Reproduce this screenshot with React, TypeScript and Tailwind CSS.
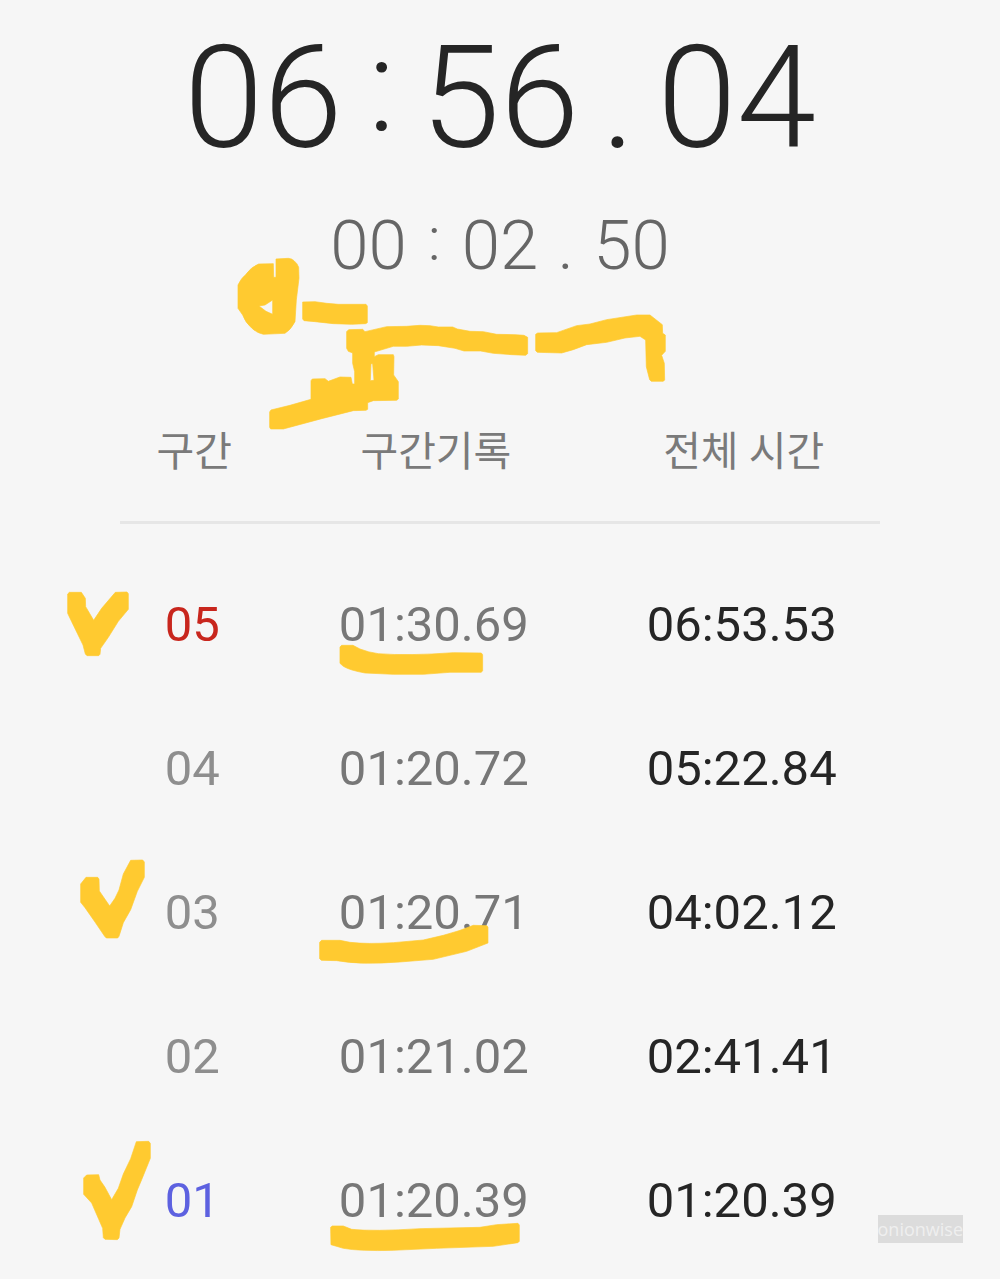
import React from 'react';
import clsx from 'clsx';

type Lap = {
  no: string;
  split: string;
  total: string;
  tone: string;
};

const laps: Lap[] = [
  { no: '05', split: '01:30.69', total: '06:53.53', tone: 'text-[#c8261d]' },
  { no: '04', split: '01:20.72', total: '05:22.84', tone: 'text-[#8e8e8e]' },
  { no: '03', split: '01:20.71', total: '04:02.12', tone: 'text-[#8e8e8e]' },
  { no: '02', split: '01:21.02', total: '02:41.41', tone: 'text-[#8e8e8e]' },
  { no: '01', split: '01:20.39', total: '01:20.39', tone: 'text-[#5d61e0]' },
];

// marker strokes, grouped by where they sit on the page
const marks = [
  {
    at: 'translate(220 200) scale(0.3333)',
    paths: [
      'M168 177L205 175Q216 176 222 182Q232 190 236 202L237 235L229 300L225 365Q212 390 195 400L130 403Q110 399 95 384Q76 368 68 345L54 325L54 255Q64 234 76 225Q94 200 116 192L160 191L161 232L168 232ZM117 318L135 315L158 300L158 343L138 334Z',
      'M248 306L285 305L320 310L355 313L438 313L442 318L442 368L437 371L395 373L340 371L285 365L252 362L248 357Z',
      'M380 395L386 389L428 388L435 395L500 380L560 379L600 376L630 377L655 381L698 381L712 387L750 394L790 395L830 403L885 404L912 406L923 412L923 461L917 466L875 464L820 460L782 453L732 453L705 445L655 437L605 435L560 439L520 439L463 456L463 470L475 464L520 464L522 470L521 525L535 545L535 597L530 601L460 602L443 608L443 628L438 631L400 632L305 656L190 687L152 687L149 682L149 636L153 630L210 616L273 598L273 542L277 537L315 536L325 544L360 531L393 532L397 552L404 552L404 515L398 490L398 459L385 454L380 445ZM453 491L458 491L462 541L451 542Z',
    ],
  },
  {
    at: 'translate(440 200) scale(0.3333)',
    paths: [
      'M287 403L293 399L350 398L410 377L450 372L500 359L590 345L630 345L667 374L668 400L676 405L676 454L665 466L673 490L674 540L670 544L634 544L629 539L619 500L617 420L600 409L555 414L500 427L440 434L400 449L365 459L292 457L287 452Z',
    ],
  },
  {
    at: 'translate(50 570) scale(0.3333)',
    paths: [
      'M53 72L58 67L94 67L106 85L107 110L131 151L155 115L196 67L231 66L235 71L235 118L205 154L175 202L152 235L150 253L146 257L111 257L106 252L99 225L65 155L53 130Z',
      'M870 231L875 226L909 226L930 237Q955 247 985 251Q1075 258 1210 248L1294 249L1298 254L1298 302L1294 307L1200 307L1120 313L1030 313L945 309Q900 301 880 289L870 280Z',
    ],
  },
  {
    at: 'translate(60 840) scale(0.3333)',
    paths: [
      'M62 132L78 112L113 112L117 117L118 153L149 198L165 175L177 150L190 102L212 61L248 60L253 66L253 112L232 154L212 209L190 248L177 289L173 294L139 294L134 289L105 246L75 203L62 187Z',
      'M779 307L785 301L840 301L870 307Q920 313 1000 308L1090 300L1150 286Q1200 273 1240 256L1281 257L1284 262L1284 309L1220 334L1120 358L1020 366Q900 375 830 362L784 361L779 356Z',
    ],
  },
  {
    at: 'translate(60 1120) scale(0.3333)',
    paths: [
      'M71 174L80 165L116 164L120 180L135 202L155 239L175 205L190 162L212 116L229 65L266 64L271 70L271 115L245 179L232 210L215 260L195 294L180 328L177 354L172 359L135 358L130 353L128 325L95 249L71 223Z',
      'M812 322L817 318L850 318L875 328Q940 335 1080 326L1260 322L1310 314L1374 310L1378 315L1378 364L1374 368L1300 379L1130 385L1000 391Q900 394 850 385L813 374Z',
    ],
  },
];

const MarkerLayer: React.FC = () => (
  <svg
    className="pointer-events-none absolute top-0 left-0 w-full"
    viewBox="0 0 1000 1279"
    fill="#ffca30"
    stroke="#ffca30"
    strokeWidth={2}
    strokeLinejoin="round"
    fillRule="evenodd"
    aria-hidden="true"
  >
    {marks.map((group) => (
      <g key={group.at} transform={group.at}>
        {group.paths.map((d) => (
          <path key={d} d={d} />
        ))}
      </g>
    ))}
  </svg>
);

const MainTimer: React.FC = () => (
  <h1 className="flex justify-center text-[143px] leading-[144px] font-light text-[#252525]">
    <span>06</span>
    <span className="w-[78px] text-center text-[130px] leading-[120px]">:</span>
    <span>56</span>
    <span className="w-[78px] text-center">.</span>
    <span>04</span>
  </h1>
);

const LapTimer: React.FC = () => (
  <p className="mt-9 flex justify-center text-[69px] leading-[80px] font-light text-[#666666]">
    <span>00</span>
    <span className="w-[55px] text-center text-[62px] leading-[66px]">:</span>
    <span>02</span>
    <span className="w-[55px] text-center">.</span>
    <span>50</span>
  </p>
);

export default function App() {
  return (
    <main className="relative min-h-screen overflow-hidden bg-[#f6f6f6] pt-[26px] font-['Roboto','Noto_Sans_CJK_KR',sans-serif]">
      <MainTimer />
      <LapTimer />

      <table className="mx-auto mt-[92px] w-[76%] table-fixed border-collapse text-center text-[49px] leading-[56px]">
        <colgroup>
          <col className="w-[19%]" />
          <col className="w-[44.6%]" />
          <col className="w-[36.4%]" />
        </colgroup>
        <thead>
          <tr className="h-[144px] border-b-3 border-[#e6e6e6] text-[41px] text-[#7a7a7a]">
            <th className="pt-1.5 pl-1 font-normal">구간</th>
            <th className="pt-1.5 pl-1 font-normal">구간기록</th>
            <th className="pt-1.5 pl-1 font-normal">전체 시간</th>
          </tr>
        </thead>
        <tbody className="before:block before:h-[29px]">
          {laps.map((lap) => (
            <tr key={lap.no} className="h-36">
              <td className={clsx('p-0', lap.tone)}>{lap.no}</td>
              <td className="p-0 text-[#777777]">{lap.split}</td>
              <td className="p-0 text-[#252525]">{lap.total}</td>
            </tr>
          ))}
        </tbody>
      </table>

      <MarkerLayer />

      <span className="absolute right-[37px] bottom-9 bg-[#dcdcdc] text-[18px] leading-7 text-[#efefef] font-['Open_Sans',sans-serif]">
        onionwise
      </span>
    </main>
  );
}
